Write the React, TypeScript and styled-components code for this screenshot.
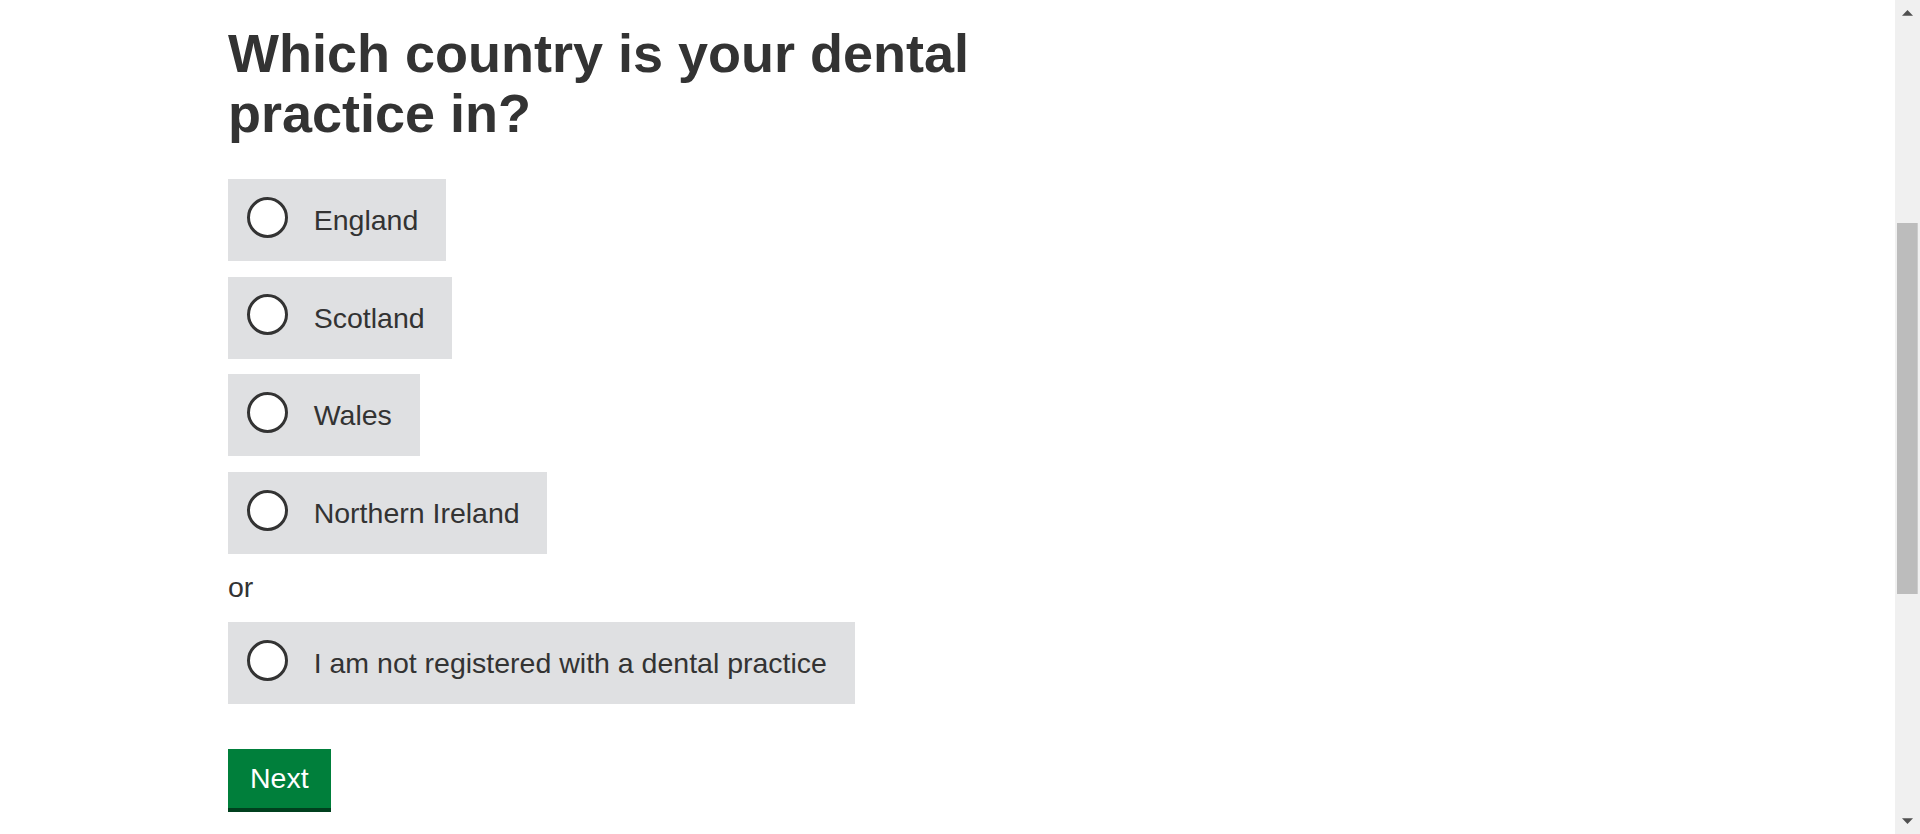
import React from "react";
import styled, { createGlobalStyle } from "styled-components";

const GlobalStyle = createGlobalStyle`
  body {
    margin: 0;
    background: #ffffff;
    color: #333333;
    font-family: "Liberation Sans", Arial, sans-serif;
  }
  * { box-sizing: border-box; }
`;

const Page = styled.div`
  display: flex;
  align-items: flex-start;
  height: 834px;
  overflow: hidden;
`;

const Content = styled.div`
  flex: 1;
  min-width: 0;
`;

const Main = styled.main`
  width: 100%;
  max-width: 1439px;
  margin: 0 auto;
  padding-top: 23px;
  display: flex;
  flex-direction: column;
  align-items: flex-start;
`;

const Heading = styled.h1`
  margin: 0 0 36px;
  width: 760px;
  font-size: 54px;
  line-height: 60px;
  font-weight: 700;
  color: #333333;
`;

const Fieldset = styled.fieldset`
  margin: 0;
  padding: 0;
  border: 0;
  display: flex;
  flex-direction: column;
  align-items: flex-start;
`;

const OptionList = styled.div`
  display: flex;
  flex-direction: column;
  align-items: flex-start;
  gap: 15.67px;
`;

const Option = styled.label`
  display: flex;
  align-items: flex-start;
  padding: 20px 27.7px 20px 19.3px;
  background: #dfe0e2;
  cursor: pointer;
`;

const Radio = styled.input.attrs({ type: "radio" })`
  appearance: none;
  -webkit-appearance: none;
  flex-shrink: 0;
  width: 41px;
  height: 41px;
  margin: -2.3px 25.4px 0 0;
  border: 3px solid #333333;
  border-radius: 50%;
  background: #ffffff;
`;

const OptionText = styled.span`
  font-size: 28.5px;
  line-height: 42px;
  color: #333333;
  white-space: nowrap;
`;

const Or = styled.p`
  margin: 11.8px 0 14.2px;
  font-size: 28.5px;
  line-height: 42px;
  color: #333333;
`;

const NextButton = styled.button`
  margin-top: 45px;
  padding: 13px 22px;
  border: 0;
  border-radius: 0;
  background: #007f3b;
  box-shadow: 0 4px 0 #00401e;
  color: #ffffff;
  font-family: "Liberation Sans", Arial, sans-serif;
  font-size: 28.5px;
  line-height: 33px;
  cursor: pointer;
`;

const Scrollbar = styled.aside`
  flex-shrink: 0;
  width: 25px;
  height: 834px;
  background: #f0f0f0;
  display: flex;
`;

const ScrollbarDrawing = () => (
  <svg width="25" height="834" viewBox="0 0 25 834" aria-hidden="true">
    <polygon points="7,15.7 12.5,10 18,15.7" fill="#505050" />
    <rect x="2" y="223" width="20.7" height="371" fill="#bcbcbc" />
    <polygon points="7,818.3 18,818.3 12.5,824" fill="#505050" />
  </svg>
);

const countries = ["England", "Scotland", "Wales", "Northern Ireland"];

export default function App() {
  return (
    <Page>
      <GlobalStyle />
      <Content>
        <Main>
          <Heading>Which country is your dental practice in?</Heading>
          <Fieldset>
            <OptionList>
              {countries.map((c) => (
                <Option key={c}>
                  <Radio name="country" value={c} />
                  <OptionText>{c}</OptionText>
                </Option>
              ))}
            </OptionList>
            <Or>or</Or>
            <Option>
              <Radio name="country" value="none" />
              <OptionText>I am not registered with a dental practice</OptionText>
            </Option>
          </Fieldset>
          <NextButton type="button">Next</NextButton>
        </Main>
      </Content>
      <Scrollbar>
        <ScrollbarDrawing />
      </Scrollbar>
    </Page>
  );
}
